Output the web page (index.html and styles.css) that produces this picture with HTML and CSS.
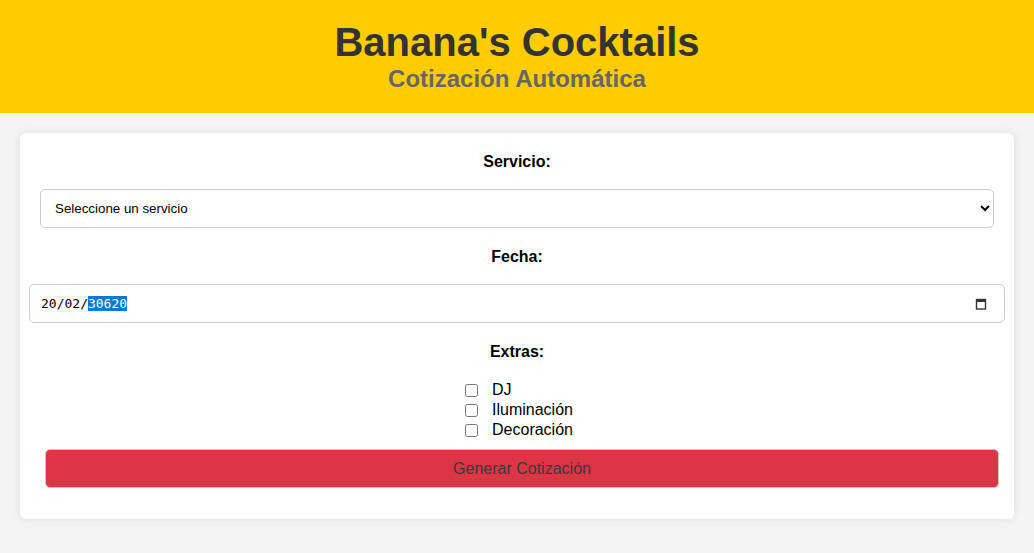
FILE: index.html
```html
<!DOCTYPE html>
<html lang="es">
<head>
<meta charset="utf-8">
<title>Banana's Cocktails</title>
<link rel="stylesheet" href="styles.css">
</head>
<body>
<header class="site-header">
  <h1 class="title">Banana's Cocktails</h1>
  <h2 class="subtitle">Cotización Automática</h2>
</header>
<main class="card">
  <form class="quote-form">
    <label class="field-label" for="servicio">Servicio:</label>
    <select id="servicio" class="select">
      <option>Seleccione un servicio</option>
    </select>
    <label class="field-label">Fecha:</label>
    <div class="date-input">
      <span class="date-text">20/02/<span class="date-sel">30620</span></span>
      <svg class="cal-icon" width="12" height="12" viewBox="0 0 12 12" aria-hidden="true">
        <rect x="1.5" y="1.5" width="9" height="9.5" fill="none" stroke="#333" stroke-width="1.4"/>
        <rect x="1" y="1" width="10" height="3" fill="#333"/>
      </svg>
    </div>
    <label class="field-label extras-label">Extras:</label>
    <div class="extras">
      <label class="extra"><input type="checkbox" class="check"><span>DJ</span></label>
      <label class="extra"><input type="checkbox" class="check"><span>Iluminación</span></label>
      <label class="extra"><input type="checkbox" class="check"><span>Decoración</span></label>
    </div>
    <button type="button" class="submit">Generar Cotización</button>
  </form>
</main>
</body>
</html>
```

FILE: styles.css
```css
html, body {
  margin: 0;
  padding: 0;
}
body {
  background: #f4f4f4;
  font-family: "Liberation Sans", Arial, sans-serif;
  color: #000;
}
.site-header {
  background: #ffcc00;
  text-align: center;
  padding: 19px 0 20px;
}
.title {
  margin: 0;
  font-size: 40px;
  font-weight: bold;
  color: #333;
  line-height: 46px;
}
.subtitle {
  margin: 0;
  font-size: 24px;
  font-weight: bold;
  color: #666;
  line-height: 28px;
}
.card {
  display: block;
  margin: 20px;
  background: #fff;
  border-radius: 6px;
  box-shadow: 0 0 10px rgba(0, 0, 0, 0.1);
  padding: 20px 20px 20px;
}
.quote-form {
  display: flex;
  flex-direction: column;
  align-items: center;
}
.field-label {
  display: block;
  font-size: 16px;
  font-weight: bold;
  line-height: 18px;
  margin: 0 0 18px;
}
.select {
  box-sizing: border-box;
  width: 100%;
  height: 39px;
  padding: 0 6px 0 10px;
  border: 1px solid #ccc;
  border-radius: 5px;
  background: #fff;
  font-family: "Liberation Sans", Arial, sans-serif;
  font-size: 13.33px;
  color: #000;
  margin: 0 0 20px;
}
.date-input {
  box-sizing: border-box;
  width: 976px;
  flex: none;
  height: 39px;
  border: 1px solid #ccc;
  border-radius: 5px;
  padding: 0 17px 0 11px;
  display: flex;
  align-items: center;
  justify-content: space-between;
  margin: 0 0 20px;
  background: #fff;
}
.date-text {
  font-family: "DejaVu Sans Mono", monospace;
  font-size: 13px;
  line-height: 14px;
  color: #000;
}
.date-sel {
  background: #0078d7;
  color: #fff;
}
.cal-icon {
  display: block;
}
.extras-label {
  margin-bottom: 19px;
}
.extras {
  display: flex;
  flex-direction: column;
  align-items: flex-start;
}
.extra {
  display: flex;
  align-items: center;
  height: 20px;
  font-size: 16px;
}
.check {
  width: 13px;
  height: 13px;
  margin: 0 14px 0 4px;
}
.submit {
  box-sizing: border-box;
  width: 100%;
  height: 39px;
  margin: 9px 0 11px 10px;
  background: #dc3545;
  border: 1px solid #c8c8c8;
  border-radius: 5px;
  color: #3a3a3a;
  font-family: "Liberation Sans", Arial, sans-serif;
  font-size: 16px;
  padding: 0;
}
```
